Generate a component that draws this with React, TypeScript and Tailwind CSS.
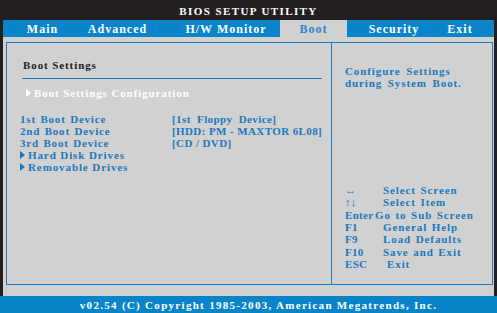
const serif = { fontFamily: '"Liberation Serif", "Times New Roman", serif' };

function Tri({ color }: { color: string }) {
  return (
    <svg width="5" height="8" viewBox="0 0 5 8" className="mr-[3px] inline-block shrink-0">
      <polygon points="0,0 5,4 0,8" fill={color} />
    </svg>
  );
}

const tabs = [
  { label: "Main", w: "w-[79px]" },
  { label: "Advanced", w: "w-[71px]" },
  { label: "", w: "w-[19px]" },
  { label: "H/W Monitor", w: "w-[108px]" },
  { label: "Boot", w: "w-[67px]", active: true },
  { label: "Security", w: "w-[94px]" },
  { label: "Exit", w: "w-[38px]" },
];

const devices = [
  ["1st Boot Device", "[1st  Floppy  Device]"],
  ["2nd Boot Device", "[HDD: PM - MAXTOR 6L08]"],
  ["3rd Boot Device", "[CD / DVD]"],
];

// key, description, key column width
const help = [
  ["↔", "Select Screen", "w-[38px]"],
  ["↑↓", "Select Item", "w-[38px]"],
  ["Enter", "Go to Sub Screen", "w-[30px]"],
  ["F1", "General Help", "w-[38px]"],
  ["F9", "Load Defaults", "w-[38px]"],
  ["F10", "Save and Exit", "w-[38px]"],
  ["ESC", "Exit", "w-[42px]"],
];

export default function App() {
  return (
    <div
      className="flex h-[313px] w-[497px] flex-col overflow-hidden bg-[#231f20] text-[11px] font-bold leading-[12px] tracking-[0.9px]"
      style={serif}
    >
      <div className="flex h-[20px] items-center justify-center pt-[1px] text-[11px] tracking-[1.4px] text-white">
        BIOS SETUP UTILITY
      </div>

      <div className="flex flex-1 flex-col px-[3px]">
        <div className="flex h-[17px] bg-[#0a84c9] text-[12px] tracking-[1px]">
          {tabs.map((t, i) => (
            <div
              key={i}
              className={`flex shrink-0 items-center justify-center ${t.w} ${
                t.active ? "bg-[#d1d1d1] text-[#2d86c6]" : "text-white"
              }`}
            >
              {t.label}
            </div>
          ))}
        </div>

        <div className="flex flex-1 bg-[#d1d1d1] pb-[11px] pl-[3px] pr-[1px] pt-[5px]">
          <div className="flex flex-1 border border-[#1f7bbf]">
            <div className="flex w-[325px] flex-col border-r border-[#1f7bbf]">
              <div className="ml-[15px] mr-[9px] border-b border-[#1f7bbf] pb-[7px] pl-[1px] pt-[16px] text-[#1e1e1e]">
                Boot Settings
              </div>
              <div className="ml-[19px] mt-[8px] flex items-center text-white">
                <Tri color="#ffffff" />
                Boot Settings Configuration
              </div>
              <div className="ml-[13px] mt-[14px] flex flex-col text-[#1b78bd]">
                {devices.map(([k, v]) => (
                  <div key={k} className="flex h-[12px] items-center">
                    <span className="w-[152px] shrink-0 whitespace-pre tracking-[0.8px] [word-spacing:1px]">{k}</span>
                    <span className="whitespace-pre tracking-[0.4px]">{v}</span>
                  </div>
                ))}
                <div className="flex h-[12px] items-center">
                  <Tri color="#1b78bd" />
                  Hard Disk Drives
                </div>
                <div className="flex h-[12px] items-center">
                  <Tri color="#1b78bd" />
                  Removable Drives
                </div>
              </div>
            </div>

            <div className="flex flex-1 flex-col pl-[13px] text-[#1b78bd]">
              <div className="mt-[22px] [word-spacing:2px]">
                <div>Configure Settings</div>
                <div>during System Boot.</div>
              </div>
              <div className="mt-[95px] flex flex-col">
                {help.map(([k, d, w]) => (
                  <div key={k} className="flex h-[12.3px] items-center">
                    <span className={`shrink-0 whitespace-nowrap tracking-[0.3px] ${w}`}>{k}</span>
                    <span className="whitespace-nowrap [word-spacing:1px]">{d}</span>
                  </div>
                ))}
              </div>
            </div>
          </div>
        </div>
      </div>

      <div className="flex h-[17px] items-center justify-center bg-[#0a84c9] pl-[20px] tracking-[1.3px] text-white">
        v02.54 (C) Copyright 1985-2003, American Megatrends, Inc.
      </div>
    </div>
  );
}
